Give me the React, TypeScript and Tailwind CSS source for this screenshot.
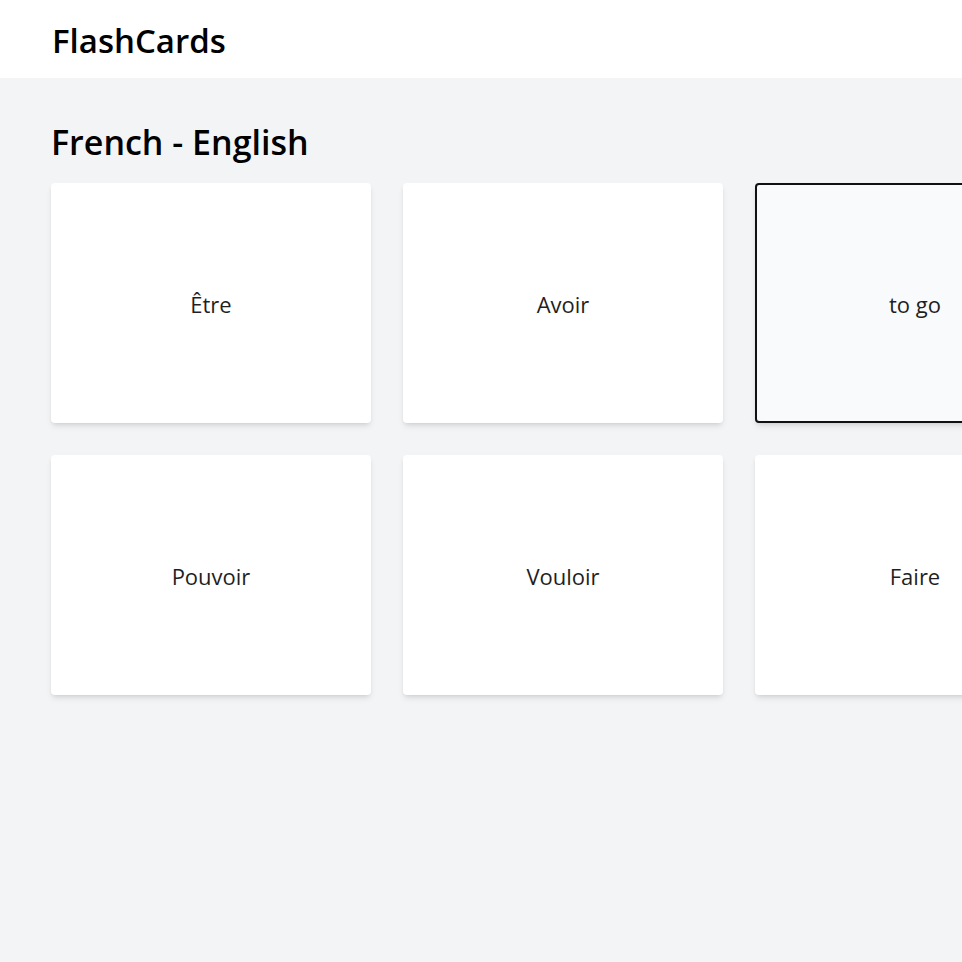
import React from "react";

const cards = [
  { text: "Être", flipped: false },
  { text: "Avoir", flipped: false },
  { text: "to go", flipped: true },
  { text: "Pouvoir", flipped: false },
  { text: "Vouloir", flipped: false },
  { text: "Faire", flipped: false },
];

const App: React.FC = () => {
  return (
    <div
      className="min-h-screen w-full overflow-hidden bg-[#f3f4f6] text-black"
      style={{ fontFamily: '"Open Sans", "Noto Sans", sans-serif' }}
    >
      {/* Header */}
      <header className="flex h-[78px] items-center bg-white px-[52px] pt-[3px]">
        <h1 className="text-[33px] font-semibold">FlashCards</h1>
      </header>

      {/* Deck */}
      <main className="px-[51px] pt-[40px]">
        <h2 className="mb-[17px] text-[34px] font-semibold leading-[48px]">
          French - English
        </h2>
        <div className="grid w-max grid-cols-[repeat(3,320px)] gap-8">
          {cards.map((card) => (
            <div
              key={card.text}
              className={`flex h-[240px] items-center justify-center rounded pt-[2px] shadow-md ${
                card.flipped ? "border-2 border-[#111] bg-[#f9fafb]" : "bg-white"
              }`}
            >
              <span className="text-[22px] text-[#1f1f1f]">{card.text}</span>
            </div>
          ))}
        </div>
      </main>
    </div>
  );
};

export default App;
